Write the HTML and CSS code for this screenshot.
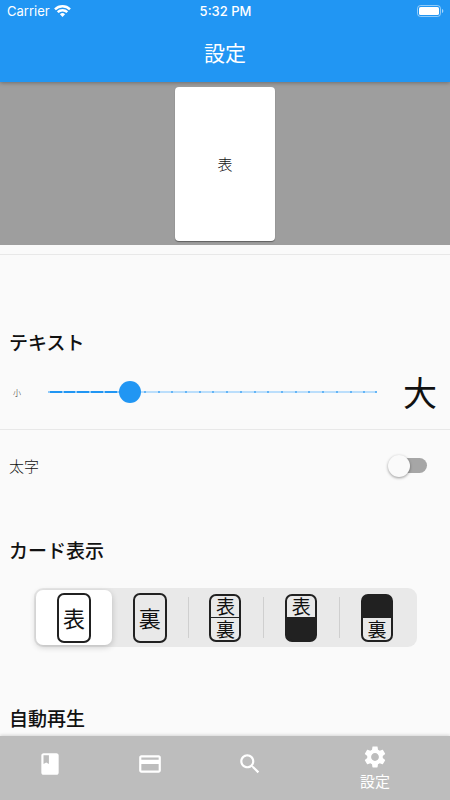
FILE: index.html
```html
<!DOCTYPE html>
<html lang="ja">
<head>
  <meta charset="utf-8">
  <meta name="viewport" content="width=device-width, initial-scale=1">
  <title>設定</title>
  <link rel="stylesheet" href="styles.css">
</head>
<body>
  <header class="header">
    <div class="status">
      <span class="carrier">Carrier
        <svg width="17" height="12" viewBox="0 0 17 12" fill="none" stroke="#fff" stroke-width="2.5">
          <path d="M1 4.3a10.8 10.8 0 0 1 15 0"/>
          <path d="M3.7 7.2a6.9 6.9 0 0 1 9.6 0"/>
          <path d="M8.5 12 5.9 9.3a3.8 3.8 0 0 1 5.2 0z" fill="#fff" stroke="none"/>
        </svg>
      </span>
      <span class="time">5:32 PM</span>
      <svg class="battery" width="27" height="12" viewBox="0 0 27 12">
        <rect x="0.5" y="0.5" width="23" height="11" rx="3" fill="none" stroke="#fff" stroke-opacity=".5"/>
        <rect x="2" y="2" width="20" height="8" rx="1.6" fill="#fff"/>
        <path d="M25 4v4c.8-.3 1.3-1.100 1.300-2s-.5-1.700-1.300-2z" fill="#fff" fill-opacity=".6"/>
      </svg>
    </div>
    <h1 class="title">設定</h1>
  </header>

  <div class="preview">
    <div class="preview-card">表</div>
  </div>

  <main class="settings">
    <section class="section section-text">
      <h2>テキスト</h2>
      <div class="row size-row">
        <label class="small" for="size">小</label>
        <div class="slider">
          <input type="range" id="size" min="0" max="24" value="6">
        </div>
        <label class="large" for="size">大</label>
      </div>
      <div class="row">
        <label for="bold">太字</label>
        <input type="checkbox" role="switch" id="bold" class="switch">
      </div>
    </section>

    <section class="section">
      <h2>カード表示</h2>
      <!-- 表示パターンの選択 -->
      <div class="segments">
        <label class="segment">
          <input type="radio" name="view" aria-label="表" checked>
          <span class="card big"><span>表</span></span>
        </label>
        <label class="segment">
          <input type="radio" name="view" aria-label="裏">
          <span class="card big"><span>裏</span></span>
        </label>
        <label class="segment">
          <input type="radio" name="view" aria-label="表と裏">
          <span class="card split"><span>表</span><span>裏</span></span>
        </label>
        <label class="segment">
          <input type="radio" name="view" aria-label="表のみ">
          <span class="card split hide-bottom"><span>表</span><span></span></span>
        </label>
        <label class="segment">
          <input type="radio" name="view" aria-label="裏のみ">
          <span class="card split hide-top"><span></span><span>裏</span></span>
        </label>
      </div>
    </section>

    <section class="section section-auto">
      <h2>自動再生</h2>
    </section>
  </main>

  <nav class="nav">
    <button type="button" aria-label="単語帳">
      <svg viewBox="0 0 24 24"><path fill-rule="evenodd" d="M18 2H6c-1.100 0-2 .9-2 2v16c0 1.100.9 2 2 2h12c1.100 0 2-.9 2-2V4c0-1.100-.9-2-2-2zM6 4h5v8l-2.500-1.500L6 12V4z"/></svg>
    </button>
    <button type="button" aria-label="カード">
      <svg viewBox="0 0 24 24"><path fill-rule="evenodd" d="M20 4H4c-1.110 0-1.990.89-1.990 2L2 18c0 1.110.89 2 2 2h16c1.110 0 2-.89 2-2V6c0-1.110-.89-2-2-2zm0 14H4v-6h16v6zm0-10H4V6h16v2z"/></svg>
    </button>
    <button type="button" aria-label="検索">
      <svg viewBox="0 0 24 24"><path d="M15.500 14h-.79l-.28-.27C15.410 12.590 16 11.110 16 9.500 16 5.910 13.090 3 9.500 3S3 5.910 3 9.500 5.910 16 9.500 16c1.610 0 3.090-.59 4.230-1.570l.27.28v.79l5 4.990L20.490 19l-4.990-5zm-6 0C7.010 14 5 11.990 5 9.500S7.010 5 9.500 5 14 7.010 14 9.500 11.990 14 9.500 14z"/></svg>
    </button>
    <button type="button" class="active">
      <svg viewBox="0 0 24 24"><path d="M19.140 12.940c.04-.3.060-.61.060-.94 0-.32-.02-.64-.07-.94l2.030-1.580c.18-.14.23-.41.120-.61l-1.920-3.320c-.12-.22-.37-.29-.59-.22l-2.390.96c-.5-.38-1.030-.7-1.620-.94L14.400 2.810c-.04-.24-.24-.41-.48-.41h-3.840c-.24 0-.43.17-.47.41L9.250 5.350C8.660 5.590 8.120 5.920 7.630 6.290L5.240 5.330c-.22-.08-.47 0-.59.22L2.740 8.870c-.12.210-.08.470.12.610l2.030 1.580c-.05.300-.09.630-.09.940s.02.640.07.940l-2.030 1.580c-.18.140-.23.410-.12.610l1.920 3.320c.12.220.37.290.59.220l2.390-.96c.5.380 1.030.700 1.620.940l.36 2.540c.05.240.24.410.48.410h3.840c.24 0 .44-.17.47-.41l.36-2.540c.59-.24 1.130-.56 1.620-.94l2.390.96c.22.080.47 0 .59-.22l1.920-3.320c.12-.22.070-.47-.12-.61l-2.010-1.580zM12 15.600c-1.980 0-3.600-1.620-3.600-3.600s1.620-3.600 3.600-3.600 3.600 1.620 3.600 3.600-1.620 3.600-3.600 3.600z"/></svg>
      <span>設定</span>
    </button>
  </nav>
</body>
</html>
```

FILE: styles.css
```css
* {
  box-sizing: border-box;
}

body {
  margin: 0;
  height: 100vh;
  display: flex;
  flex-direction: column;
  background-color: #fafafa;
  color: #111;
  font-family: "Noto Sans CJK JP", sans-serif;
  font-weight: 300;
  font-size: 15px;
}

h1, h2 {
  margin: 0;
}

.header {
  position: relative;
  z-index: 1;
  background-color: #2196f3;
  color: white;
  box-shadow: 0 1px 4px rgba(0, 0, 0, 0.3);
}

.status {
  display: grid;
  grid-template-columns: 1fr auto 1fr;
  align-items: center;
  height: 22px;
  padding: 0 6px 0 7px;
  font-family: Inter, sans-serif;
  font-size: 13px;
  font-weight: 400;
}

.carrier {
  display: flex;
  align-items: center;
  gap: 4px;
}

.time {
  font-weight: 500;
}

.battery {
  justify-self: end;
}

.title {
  height: 60px;
  line-height: 60px;
  text-align: center;
  font-size: 21px;
  font-weight: 400;
}

.preview {
  display: flex;
  justify-content: center;
  padding: 5px 0 4px;
  background-color: #9e9e9e;
}

.preview-card {
  display: flex;
  align-items: center;
  justify-content: center;
  width: 100px;
  height: 154px;
  border-radius: 4px;
  background-color: white;
  box-shadow: 0 1px 1px rgba(0, 0, 0, 0.4);
  line-height: 20px;
}

.settings {
  flex: 1;
  min-height: 0;
  overflow: hidden;
  margin-top: 9px;
  border-top: 1px solid #e8e8e8;
}

.section {
  padding-top: 34px;
}

.section h2 {
  padding: 0 9px;
  line-height: 30px;
  font-size: 19px;
  font-weight: 500;
}

.section-text {
  padding-top: 72px;
}

.section-auto {
  padding-top: 56px;
}

.row {
  display: flex;
  align-items: center;
  justify-content: space-between;
  height: 72px;
  padding: 0 9px;
}

.row + .row {
  border-top: 1px solid #e8e8e8;
}

.size-row {
  padding-bottom: 2px;
}

.small {
  width: 16px;
  font-size: 8px;
  text-align: center;
}

.large {
  width: 42px;
  line-height: 40px;
  font-size: 34px;
  font-weight: 400;
  text-align: center;
}

/* 目盛り付きのトラック */
.slider {
  flex: 1;
  height: 22px;
  margin: 0 22px 0 23px;
  background-image:
    linear-gradient(#64b5f6, #64b5f6),
    repeating-linear-gradient(to right, #90caf9 0 2px, transparent 2px calc(100% / 6)),
    linear-gradient(#2196f3, #2196f3),
    repeating-linear-gradient(to right, #64b5f6 0 2px, transparent 2px calc(100% / 24)),
    linear-gradient(#bbdefb, #bbdefb);
  background-repeat: no-repeat;
  background-position: right center, left center, left center, left center, left center;
  background-size: 2px 2px, 25% 2px, 25% 2px, 100% 2px, 100% 2px;
}

.slider input {
  appearance: none;
  display: block;
  width: calc(100% + 22px);
  height: 22px;
  margin: 0 -11px;
  background: none;
}

.slider input::-webkit-slider-thumb {
  appearance: none;
  width: 22px;
  height: 22px;
  border-radius: 50%;
  background-color: #2196f3;
}

.switch {
  appearance: none;
  display: flex;
  align-items: center;
  width: 37px;
  height: 15px;
  margin: 0 14px 0 0;
  border-radius: 8px;
  background-color: #a6a6a6;
}

.switch::before {
  content: "";
  width: 22px;
  height: 22px;
  margin-left: -2px;
  border-radius: 50%;
  background-color: #fafafa;
  box-shadow: 0 1px 3px rgba(0, 0, 0, 0.4);
}

.switch:checked {
  justify-content: flex-end;
  background-color: #90caf9;
}

.segments {
  display: grid;
  grid-template-columns: repeat(5, 1fr);
  height: 59px;
  margin: 23px 33px 0 34px;
  padding: 2px;
  border-radius: 9px;
  background-color: #e9e9e9;
}

.segment {
  position: relative;
  display: flex;
  align-items: center;
  justify-content: center;
  border-radius: 7px;
}

.segment input {
  position: absolute;
  opacity: 0;
}

.segment:has(input:checked) {
  background-color: white;
  box-shadow: 0 2px 6px rgba(0, 0, 0, 0.2);
}

.segment:nth-child(n+3)::before {
  content: "";
  position: absolute;
  left: 0;
  top: 7px;
  bottom: 7px;
  width: 1px;
  background-color: #cfcfcf;
}

.card {
  display: flex;
  flex-direction: column;
  width: 32px;
  height: 48px;
  border: 2px solid #212121;
  border-radius: 7px;
  font-size: 19px;
  font-weight: 400;
}

.card span {
  flex: 1;
  display: flex;
  align-items: center;
  justify-content: center;
  line-height: 20px;
}

.card.big {
  width: 34px;
  height: 50px;
  font-size: 22px;
}

.big span {
  padding-bottom: 2px;
}

.split span + span {
  border-top: 1px solid #212121;
}

.hide-bottom {
  background: linear-gradient(transparent 50%, #212121 50%) border-box;
}

.hide-top {
  background: linear-gradient(#212121 50%, transparent 50%) border-box;
}

.nav {
  display: grid;
  grid-template-columns: 2fr 2fr 2fr 3fr;
  height: 64px;
  background-color: #bdbdbd;
  box-shadow: 0 -1px 3px rgba(0, 0, 0, 0.15);
}

.nav button {
  display: flex;
  flex-direction: column;
  align-items: center;
  justify-content: center;
  padding: 0 0 8px;
  border: none;
  background: none;
  color: white;
  font: inherit;
  line-height: 22px;
}

.nav svg {
  width: 26px;
  height: 26px;
  fill: white;
}

.nav .active {
  padding: 0;
  font-weight: 400;
}
```
